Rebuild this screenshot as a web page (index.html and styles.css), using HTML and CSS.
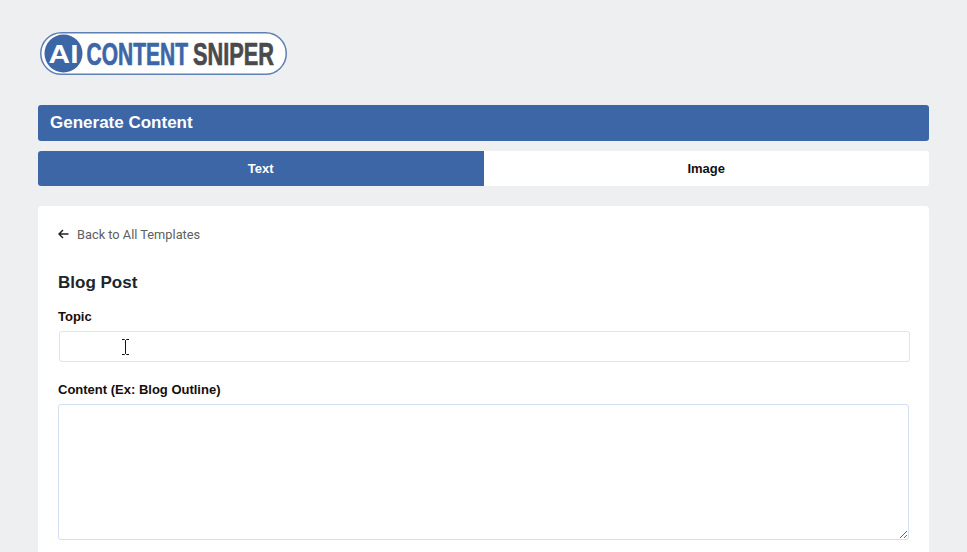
FILE: index.html
```html
<!DOCTYPE html>
<html lang="en">
<head>
<meta charset="utf-8">
<title>Generate Content</title>
<link rel="stylesheet" href="styles.css">
</head>
<body>
<div class="page">
  <svg class="logo" width="250" height="46" viewBox="0 0 250 46" xmlns="http://www.w3.org/2000/svg" role="img" aria-label="AI Content Sniper">
    <rect x="2.75" y="2.75" width="245.500" height="41.500" rx="20.750" fill="#fff" stroke="#5e80b4" stroke-width="1.500"/>
    <circle cx="25.500" cy="23.500" r="19" fill="#3d66a6"/>
    <text class="logo-ai" text-anchor="middle" transform="translate(25.500 33) scale(1.15 1)">AI</text>
    <text class="logo-word logo-blue" transform="translate(48.500 35) scale(.6775 1)">CONTENT</text>
    <text class="logo-word logo-grey" transform="translate(155 35) scale(.702 1)">SNIPER</text>
  </svg>

  <div class="title-bar">Generate Content</div>

  <div class="tabs">
    <div class="tab tab-active">Text</div>
    <div class="tab">Image</div>
  </div>

  <main class="card">
    <a class="back" href="#">
      <svg class="back-icon" width="11" height="10" viewBox="0 0 11 10" xmlns="http://www.w3.org/2000/svg"><path d="M10.500 5H1.200M5 1 1 5l4 4" fill="none" stroke="#212529" stroke-width="1.500"/></svg>
      <span>Back to All Templates</span>
    </a>
    <h2 class="form-title">Blog Post</h2>
    <div class="field field-topic">
      <label class="label" for="topic">Topic</label>
      <div class="input-wrap">
        <input class="input" id="topic" type="text">
        <svg class="cursor" width="7" height="16" viewBox="0 0 7 16" xmlns="http://www.w3.org/2000/svg"><path d="M0 .5h2.500L3.500 1.500 4.500 .5H7M3.500 1.500v13M0 15.500h2.500l1-1 1 1H7" fill="none" stroke="#111" stroke-width="1"/></svg>
      </div>
    </div>
    <div class="field">
      <label class="label" for="content">Content (Ex: Blog Outline)</label>
      <textarea class="textarea" id="content"></textarea>
    </div>
  </main>
</div>
</body>
</html>
```
FILE: styles.css
```css
* { box-sizing: border-box; }
html, body { margin: 0; height: 100%; overflow: hidden; }
body {
  background: #eeeff1;
  font-family: "Liberation Sans", Arial, sans-serif;
  color: #212529;
}
.page { padding: 30px 38px 0; }
.logo { display: block; margin-bottom: 29px; }
.logo-ai { font: 700 26px "Liberation Sans", Arial, sans-serif; fill: #fff; }
.logo-word {
  font: 700 31px "Liberation Sans", Arial, sans-serif;
  stroke-width: 0.7px;
}
.logo-blue { fill: #3d66a6; stroke: #3d66a6; }
.logo-grey { fill: #4a4a4c; stroke: #4a4a4c; }
.title-bar {
  height: 36px;
  padding-left: 12px;
  background: #3d66a6;
  border-radius: 3px;
  color: #fff;
  font-size: 17px;
  font-weight: 700;
  line-height: 35px;
}
.tabs {
  display: flex;
  height: 35px;
  margin-top: 10px;
  background: #fff;
  border-radius: 3px;
  overflow: hidden;
}
.tab {
  flex: 1;
  text-align: center;
  font-size: 13px;
  font-weight: 700;
  line-height: 35px;
  color: #111;
}
.tab-active { background: #3d66a6; color: #fff; }
.card {
  margin-top: 20px;
  padding: 20px;
  height: 346px;
  overflow: hidden;
  background: #fff;
  border-radius: 4px 4px 0 0;
}
.back {
  display: flex;
  align-items: center;
  gap: 8px;
  height: 16px;
  color: #606060;
  font-family: Roboto, "Liberation Sans", sans-serif;
  font-size: 12.8px;
  text-decoration: none;
}
.back-icon { flex: none; }
.form-title {
  margin: 31px 0 0;
  font-size: 17px;
  line-height: 20px;
  font-weight: 700;
  color: #212529;
}
.field-topic { margin-top: 15px; }
.field { margin-bottom: 19px; }
.label {
  display: block;
  height: 16px;
  margin-bottom: 7px;
  font-size: 13px;
  line-height: 18px;
  font-weight: 700;
  color: #160d0d;
}
.input-wrap { position: relative; margin-left: 1px; }
.input {
  display: block;
  width: 851px;
  height: 31px;
  border: 1px solid #dbe4f2;
  border-radius: 3px;
  background: #fff;
  outline: none;
}
.cursor { position: absolute; left: 63px; top: 8px; }
.textarea {
  display: block;
  width: 851px;
  height: 136px;
  border: 1px solid #d4e0f1;
  border-radius: 3px;
  background: #fff;
  outline: none;
  resize: vertical;
}
```
